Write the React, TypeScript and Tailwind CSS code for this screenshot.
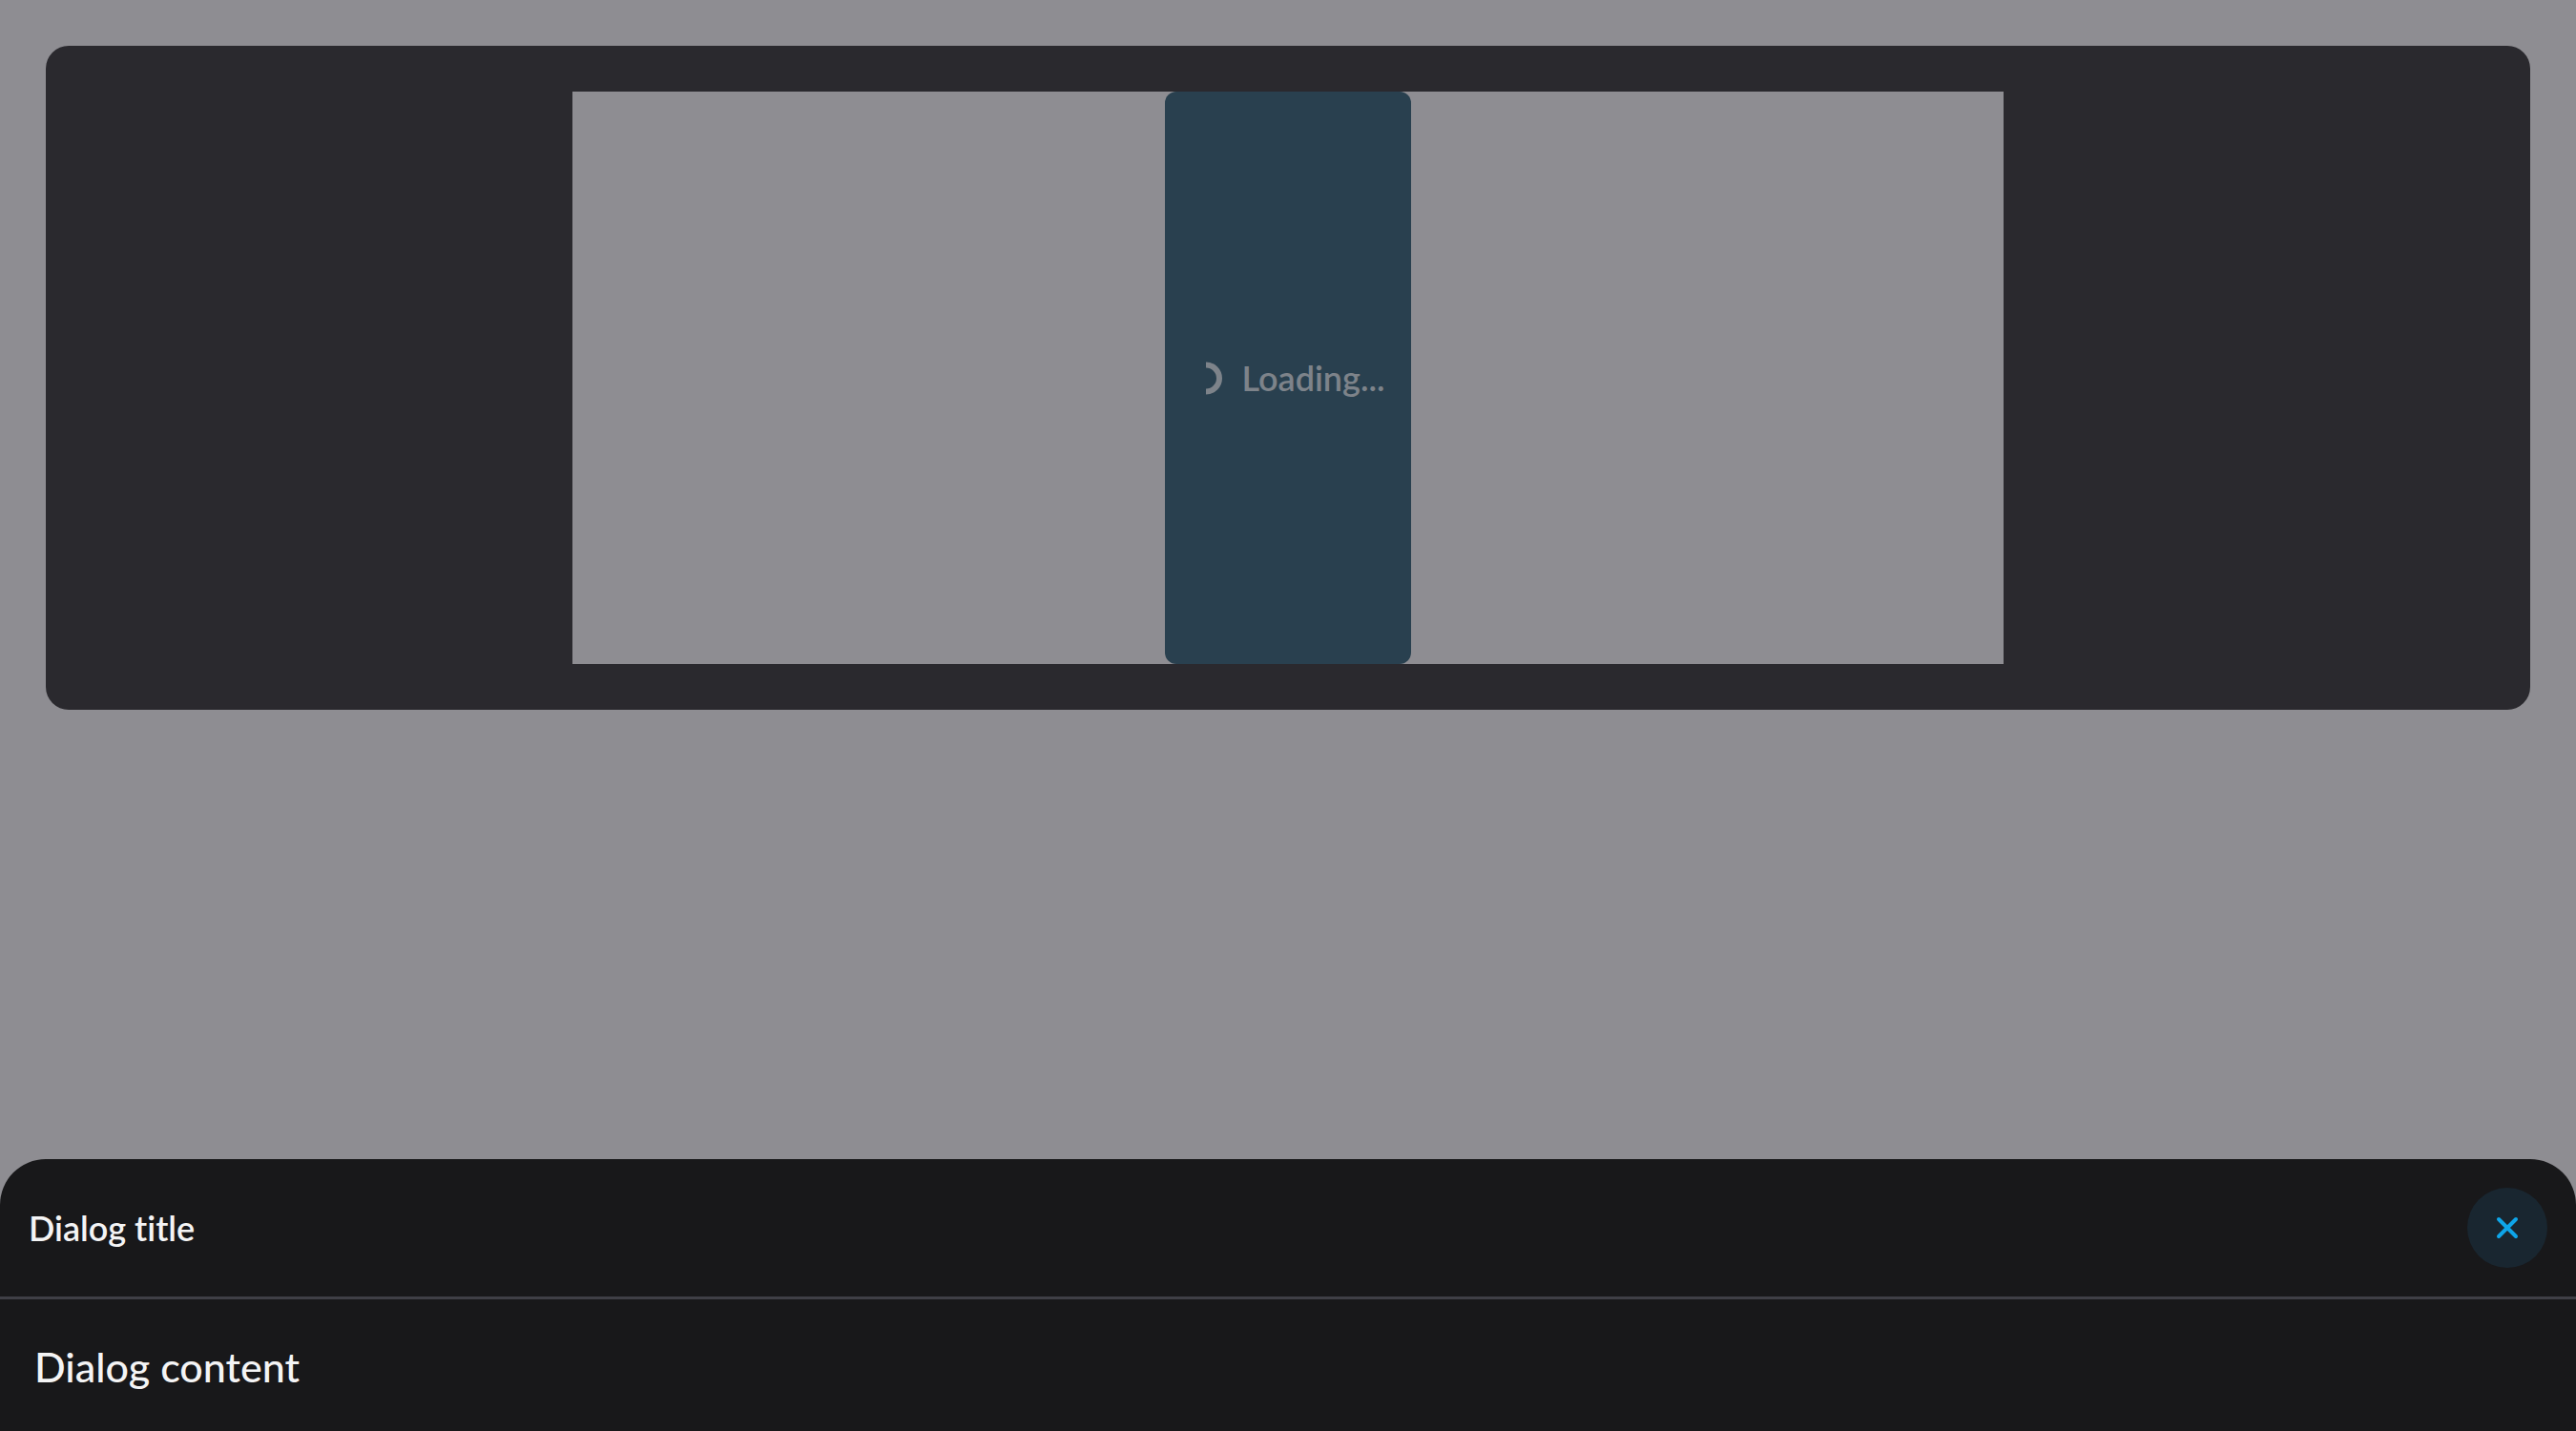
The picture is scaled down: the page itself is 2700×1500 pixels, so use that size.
function Spinner() {
  return (
    <svg viewBox="0 0 39 39" fill="none" aria-hidden="true" className="size-[39px] shrink-0">
      <path d="M19 5.5A14 14 0 0 1 19 33.5" stroke="currentColor" strokeWidth="6" />
    </svg>
  );
}

function CloseIcon() {
  return (
    <svg viewBox="0 0 24 24" fill="none" aria-hidden="true" className="size-6">
      <path d="M3 3L21 21M21 3L3 21" stroke="currentColor" strokeWidth="4" strokeLinecap="round" />
    </svg>
  );
}

export default function App() {
  return (
    <div className="flex min-h-screen flex-col justify-between bg-[#8e8d92] font-['Lato',sans-serif] [font-variant-ligatures:none]">
      <main className="p-12">
        <section className="flex justify-center rounded-3xl bg-[#2a292e] p-12">
          <div className="flex h-[600px] w-full max-w-[1500px] justify-center bg-[#8e8d92]">
            <button
              type="button"
              className="flex items-center gap-[18px] rounded-xl bg-[#29404f] pr-7 pl-6 text-[36px] leading-[54px] font-semibold text-[#7d838a]"
            >
              <Spinner />
              Loading...
            </button>
          </div>
        </section>
      </main>

      <div role="dialog" aria-labelledby="dialog-title" className="rounded-t-[48px] bg-[#18181a] text-[#f4f4f5]">
        <header className="flex items-center justify-between border-b-3 border-[#3f3f46] p-[30px]">
          <h2 id="dialog-title" className="text-[36px] leading-[54px] font-semibold">
            Dialog title
          </h2>
          <button
            type="button"
            aria-label="Close"
            className="flex size-[84px] items-center justify-center rounded-full bg-[#192630] text-[#0ea5e9]"
          >
            <CloseIcon />
          </button>
        </header>
        <p className="px-9 pt-[38px] pb-[34px] text-[43px] leading-[66px] font-medium">Dialog content</p>
      </div>
    </div>
  );
}
